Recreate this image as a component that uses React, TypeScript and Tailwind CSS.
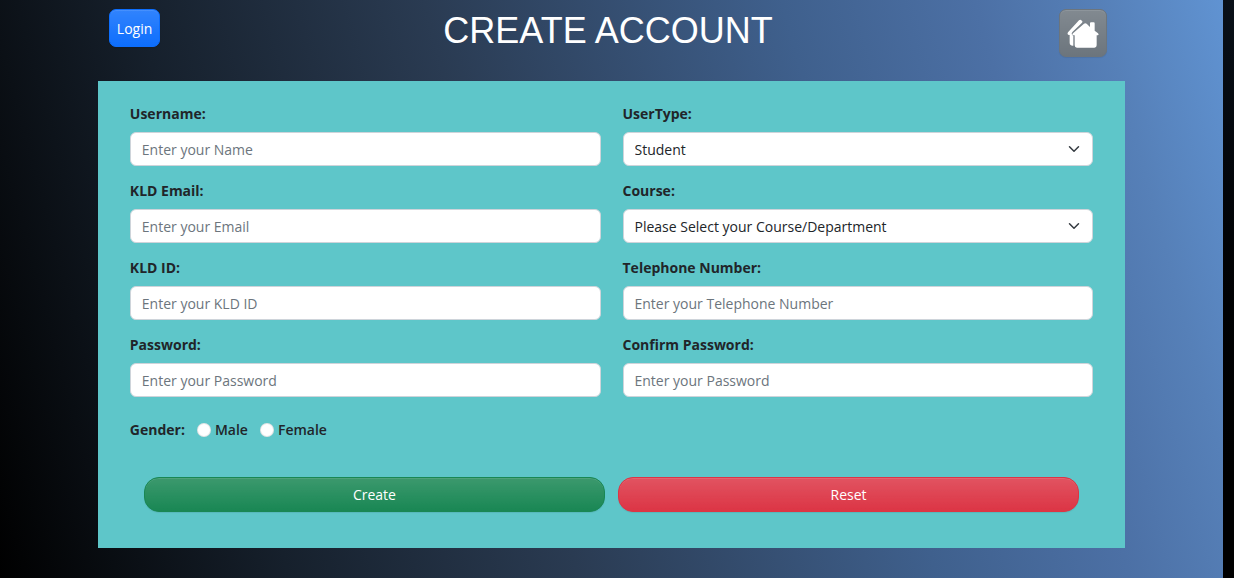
import type { ReactNode } from "react";

const labelClass = "mb-[7px] block text-[14px] leading-[22px] font-bold";
const controlClass =
  "block h-[34px] w-full rounded-md border border-[#ced4da] bg-white px-[11px] text-[14px] text-[#212529] placeholder:text-[#6c757d] placeholder:opacity-100";

function Field({ id, label, children }: { id: string; label: string; children: ReactNode }) {
  return (
    <div>
      <label htmlFor={id} className={labelClass}>
        {label}
      </label>
      {children}
    </div>
  );
}

function TextField({ id, label, hint, type = "text" }: { id: string; label: string; hint: string; type?: string }) {
  return (
    <Field id={id} label={label}>
      <input id={id} name={id} type={type} placeholder={hint} className={controlClass} />
    </Field>
  );
}

function SelectField({ id, label, options }: { id: string; label: string; options: string[] }) {
  return (
    <Field id={id} label={label}>
      <div className="relative">
        <select id={id} name={id} className={controlClass + " appearance-none"}>
          {options.map((option) => (
            <option key={option}>{option}</option>
          ))}
        </select>
        <svg
          viewBox="0 0 16 16"
          aria-hidden="true"
          className="pointer-events-none absolute top-[11px] right-[13px] size-3"
          fill="none"
          stroke="#343a40"
          strokeWidth="2"
          strokeLinecap="round"
          strokeLinejoin="round"
        >
          <path d="m2 5 6 6 6-6" />
        </svg>
      </div>
    </Field>
  );
}

function Radio({ id, label }: { id: string; label: string }) {
  return (
    <div className="flex items-center gap-1">
      <input
        id={id}
        type="radio"
        name="gender"
        className="size-[14px] appearance-none rounded-full border border-black/10 bg-white checked:border-4 checked:border-[#0d6efd]"
      />
      <label htmlFor={id} className="font-semibold">
        {label}
      </label>
    </div>
  );
}

function HousesIcon() {
  return (
    <svg viewBox="0 0 96 87" aria-hidden="true" className="h-[29px] w-8" fill="currentColor">
      <path d="M36 4Q39 1 42 3L46 7Q47 9 45 11L17 38Q12 43 15 47L19 51V80Q9 81 8 72V48L3 47Q0 44 3 40Z" />
      <path d="M51 14Q55 11 59 14L69 24V13Q69 10 72 10H80Q83 10 83 13V35L93 43Q97 48 92 49H89V79Q89 86 82 86H30Q23 86 23 79V49H18Q14 48 18 43Z" />
    </svg>
  );
}

const buttonShade =
  "bg-linear-to-b from-white/15 to-transparent shadow-[inset_0_1px_0_rgba(255,255,255,0.1),0_1px_1px_rgba(0,0,0,0.075)]";

export default function App() {
  return (
    <div className="min-h-screen bg-linear-to-t from-black to-[#0a1119] pr-[11px] font-['Open_Sans',sans-serif] text-[#212529]">
      <div className="min-h-screen bg-[linear-gradient(75deg,#000_0%,#16202c_21%,#2a3b52_42%,#3f608d_68%,#4c70a5_82%,#5680b8_91%,#6093d2_100%)] px-[8%] pb-[30px]">
        <header className="grid h-[81px] grid-cols-[1fr_auto_1fr] items-start pt-[9px] pr-[18px] pl-[11px]">
          <button
            type="button"
            className={"h-[38px] justify-self-start rounded-[7px] border border-[#0d6efd] bg-[#0d6efd] px-[7px] text-[14px] text-white " + buttonShade}
          >
            Login
          </button>
          <h1 className="font-['Liberation_Sans',sans-serif] text-[36px] leading-[43px] text-white">CREATE ACCOUNT</h1>
          <a
            href="#home"
            aria-label="Home"
            className={"flex size-[48px] items-center justify-center justify-self-end rounded-[7px] border border-[#6c757d] bg-[#6c757d] text-white " + buttonShade}
          >
            <HousesIcon />
          </a>
        </header>

        <form className="bg-[#5ec6c9] px-8 pt-[22px] pb-9" onSubmit={(e) => e.preventDefault()}>
          <div className="grid grid-cols-2 gap-x-[22px] gap-y-[14px]">
            <TextField id="username" label="Username:" hint="Enter your Name" />
            <SelectField id="usertype" label="UserType:" options={["Student", "Faculty"]} />
            <TextField id="email" label="KLD Email:" hint="Enter your Email" type="email" />
            <SelectField id="course" label="Course:" options={["Please Select your Course/Department"]} />
            <TextField id="kld-id" label="KLD ID:" hint="Enter your KLD ID" />
            <TextField id="telephone" label="Telephone Number:" hint="Enter your Telephone Number" type="tel" />
            <TextField id="password" label="Password:" hint="Enter your Password" type="password" />
            <TextField id="confirm" label="Confirm Password:" hint="Enter your Password" type="password" />
          </div>

          <div role="radiogroup" aria-labelledby="gender-label" className="mt-[22px] flex items-center gap-3 text-[14px] leading-[22px]">
            <span id="gender-label" className="font-bold">
              Gender:
            </span>
            <Radio id="male" label="Male" />
            <Radio id="female" label="Female" />
          </div>

          <div className="mt-9 grid grid-cols-2 gap-[13px] px-[14px] text-[14px] text-white">
            <button type="submit" className={"h-[35px] rounded-[15px] border border-[#198754] bg-[#198754] " + buttonShade}>
              Create
            </button>
            <button type="reset" className={"h-[35px] rounded-[15px] border border-[#dc3545] bg-[#dc3545] " + buttonShade}>
              Reset
            </button>
          </div>
        </form>
      </div>
    </div>
  );
}
